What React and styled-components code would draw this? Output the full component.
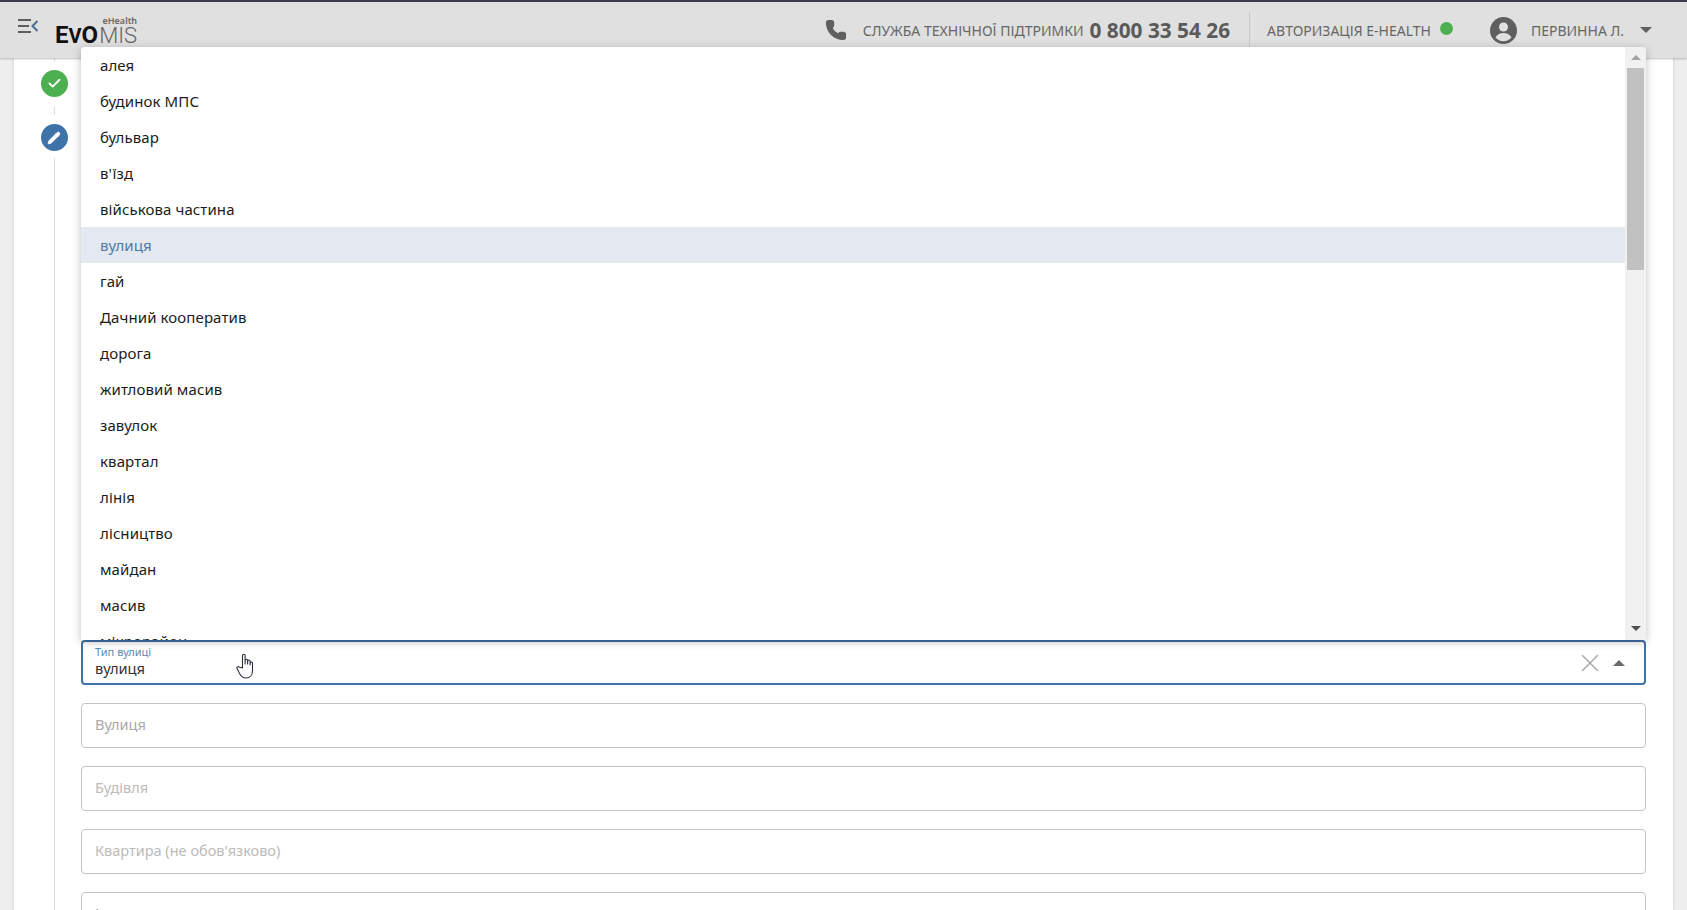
import styled, { createGlobalStyle } from 'styled-components'
import { Check, Pencil, Phone, X } from 'lucide-react'

const Global = createGlobalStyle`
    html, body {
        margin: 0;
        height: 100%;
        overflow: hidden;
        background: #fff;
        font-family: "Noto Sans", "Open Sans", sans-serif;
    }
    * { box-sizing: border-box; }
`

const Page = styled.div`
    height: 910px;
    display: flex;
    flex-flow: column;
    overflow: hidden;
`

const Header = styled.header`
    height: 58px;
    flex: none;
    background: #e0e0e0;
    border-top: 2px solid #3c3c4c;
    box-shadow: 0 1px 2px rgba(0, 0, 0, 0.25);
    display: flex;
    align-items: center;
    padding: 0 35px 0 18px;
    position: relative;
    z-index: 1;
`

const MenuButton = styled.div`
    display: flex;
    margin-top: -8px;
`

const Logo = styled.div`
    margin-left: 17px;
    margin-top: 10px;
    position: relative;
    display: flex;
    align-items: baseline;
    line-height: 24px;
`

const LogoEvo = styled.span`
    font-family: "Roboto", sans-serif;
    font-size: ${(p) => p.$size || 24}px;
    font-weight: 700;
    color: #111;
`

const LogoMis = styled.span`
    font-family: "Roboto", sans-serif;
    font-size: 22px;
    font-weight: 300;
    color: #666;
    margin-left: 1px;
`

const LogoTag = styled.span`
    position: absolute;
    right: 0;
    top: -7px;
    font-size: 9px;
    line-height: 10px;
    font-weight: 600;
    color: #666;
`

const HeaderRight = styled.div`
    margin-left: auto;
    display: flex;
    align-items: center;
    height: 100%;
`

const PhoneIcon = styled(Phone)`
    fill: #5f5f5f;
    stroke: #5f5f5f;
    margin-right: 16px;
`

const HeaderText = styled.span`
    font-size: 14px;
    color: #666;
    margin-left: ${(p) => p.$ml || 0}px;
    white-space: nowrap;
`

const PhoneNumber = styled.span`
    font-size: 20.8px;
    font-weight: 700;
    color: #5a5a5a;
    margin-left: 6px;
    white-space: nowrap;
`

const Divider = styled.div`
    width: 1px;
    height: 36px;
    background: #c8c8c8;
    margin: 0 17px 0 19px;
`

const StatusDot = styled.span`
    width: 13px;
    height: 13px;
    border-radius: 50%;
    background: #4caf50;
    margin: 0 37px 3px 9px;
`

const Caret = styled.span`
    width: 0;
    height: 0;
    border-left: 6px solid transparent;
    border-right: 6px solid transparent;
    border-top: 6px solid #5f5f5f;
    margin-left: 16px;
`

const Body = styled.div`
    flex: 1;
    display: flex;
    min-height: 0;
    background: #eee;
    padding: 0 14px;
`

const Sheet = styled.main`
    flex: 1;
    background: #fff;
    display: flex;
    box-shadow: 0 0 3px rgba(0, 0, 0, 0.15);
    padding-right: 27px;
`

const Stepper = styled.div`
    width: 67px;
    flex: none;
    display: flex;
    flex-flow: column;
    align-items: center;
    padding-left: 13px;
`

const StepLine = styled.span`
    width: 1px;
    flex: ${(p) => (p.$grow ? 1 : 'none')};
    height: ${(p) => p.$h}px;
    background: #ddd;
`

const StepDot = styled.span`
    width: 27px;
    height: 27px;
    flex: none;
    border-radius: 50%;
    background: ${(p) => p.$color};
    color: #fff;
    display: flex;
    align-items: center;
    justify-content: center;
    margin: ${(p) => p.$m};
`

const Form = styled.div`
    flex: 1;
    display: flex;
    flex-flow: column;
    gap: 18px;
    padding-top: 582px;
`

const Field = styled.div`
    height: 45px;
    flex: none;
    border: 1px solid #c4c4c4;
    border-radius: 4px;
    padding: 0 13px 4px;
    display: flex;
    align-items: center;
    font-size: 14.5px;
    color: ${(p) => p.$color || '#aaa'};
`

const SelectField = styled.div`
    height: 45px;
    flex: none;
    position: relative;
    border: 2px solid #3f72a8;
    border-radius: 4px;
    padding: 0 12px;
    display: flex;
    align-items: center;
`

const SelectText = styled.div`
    flex: 1;
    display: flex;
    flex-flow: column;
`

const SelectLabel = styled.span`
    font-size: 11px;
    line-height: 13px;
    color: #5e88b5;
    margin-top: -3px;
`

const SelectValue = styled.span`
    font-size: 14.7px;
    line-height: 20px;
    color: #333;
`

const ClearIcon = styled(X)`
    color: #aaa;
    margin-right: 8px;
`

const CaretUp = styled.span`
    width: 0;
    height: 0;
    border-left: 6px solid transparent;
    border-right: 6px solid transparent;
    border-bottom: 6px solid #6a6a6a;
    margin-right: 7px;
`

const Cursor = styled.svg`
    position: absolute;
    left: 153px;
    top: 11px;
`

const Dropdown = styled.div`
    position: absolute;
    z-index: 2;
    left: -2px;
    right: -2px;
    bottom: calc(100% + 2px);
    height: 593px;
    background: #fff;
    border-radius: 4px 4px 0 0;
    box-shadow: 0 2px 8px rgba(0, 0, 0, 0.25);
    display: flex;
    overflow: hidden;
`

const List = styled.ul`
    flex: 1;
    margin: 0;
    padding: 0;
    list-style: none;
    overflow: hidden;
`

const Item = styled.li`
    height: 36px;
    padding: 0 19px;
    display: flex;
    align-items: center;
    font-size: 15px;
    letter-spacing: 0.1px;
    color: ${(p) => (p.$active ? '#4d7aa8' : '#1c1c1c')};
    background: ${(p) => (p.$active ? '#e4e9f1' : 'transparent')};
`

const Scrollbar = styled.div`
    width: 21px;
    flex: none;
    background: #f1f1f1;
    display: flex;
    flex-flow: column;
    align-items: center;
    padding: 8px 2px 9px;
`

const ScrollThumb = styled.div`
    width: 17px;
    height: 202px;
    background: #c1c1c1;
    margin: 8px 0 auto;
`

const ArrowUp = styled.span`
    border-left: 5px solid transparent;
    border-right: 5px solid transparent;
    border-bottom: 5px solid #a3a3a3;
`

const ArrowDown = styled.span`
    border-left: 5px solid transparent;
    border-right: 5px solid transparent;
    border-top: 5px solid #505050;
`

const streetTypes = [
    'алея', 'будинок МПС', 'бульвар', "в'їзд", 'військова частина', 'вулиця', 'гай',
    'Дачний кооператив', 'дорога', 'житловий масив', 'завулок', 'квартал', 'лінія',
    'лісництво', 'майдан', 'масив', 'мікрорайон',
]

function Avatar() {
    return (
        <svg width="27" height="27" viewBox="0 0 27 27">
            <circle cx="13.5" cy="13.5" r="13.5" fill="#5f5f5f" />
            <circle cx="13.5" cy="10" r="4.5" fill="#e0e0e0" />
            <path d="M5.5 20.5c1.5-3.2 5-4.5 8-4.5s6.500 1.300 8 4.500a10.500 10.500 0 0 1-16 0z" fill="#e0e0e0" />
        </svg>
    )
}

function MenuIcon() {
    return (
        <svg width="20" height="14" viewBox="0 0 20 14" fill="none" strokeWidth="2">
            <path d="M0 1h13M0 7h11M0 13h13" stroke="#5f5f5f" />
            <path d="M19.500 2l-5 5 5 5" stroke="#4a6f95" />
        </svg>
    )
}

function App() {
    return (
        <Page>
            <Global />
            <Header>
                <MenuButton><MenuIcon /></MenuButton>
                <Logo>
                    <LogoTag>eHealth</LogoTag>
                    <LogoEvo>E</LogoEvo>
                    <LogoEvo $size={20}>V</LogoEvo>
                    <LogoEvo>O</LogoEvo>
                    <LogoMis>MIS</LogoMis>
                </Logo>
                <HeaderRight>
                    <PhoneIcon size={22} />
                    <HeaderText>СЛУЖБА ТЕХНІЧНОЇ ПІДТРИМКИ</HeaderText>
                    <PhoneNumber>0 800 33 54 26</PhoneNumber>
                    <Divider />
                    <HeaderText>АВТОРИЗАЦІЯ E-HEALTH</HeaderText>
                    <StatusDot />
                    <Avatar />
                    <HeaderText $ml={14}>ПЕРВИННА Л.</HeaderText>
                    <Caret />
                </HeaderRight>
            </Header>
            <Body>
                <Sheet>
                    <Stepper>
                        <StepLine $h={3} />
                        <StepDot $color="#4caf50" $m="9px 0 9px"><Check size={15} strokeWidth={3} /></StepDot>
                        <StepLine $h={9} />
                        <StepDot $color="#3f72a8" $m="9px 0 7px"><Pencil size={14} fill="#fff" strokeWidth={1.5} /></StepDot>
                        <StepLine $grow />
                    </Stepper>
                    <Form>
                        <SelectField>
                            <Dropdown>
                                <List>
                                    {streetTypes.map((t) => (
                                        <Item key={t} $active={t === 'вулиця'}>{t}</Item>
                                    ))}
                                </List>
                                <Scrollbar>
                                    <ArrowUp />
                                    <ScrollThumb />
                                    <ArrowDown />
                                </Scrollbar>
                            </Dropdown>
                            <SelectText>
                                <SelectLabel>Тип вулиці</SelectLabel>
                                <SelectValue>вулиця</SelectValue>
                            </SelectText>
                            <ClearIcon size={30} strokeWidth={1.2} />
                            <CaretUp />
                            <Cursor width="19" height="26" viewBox="0 0 19 26" fill="#fff" stroke="#2a2f3a" strokeWidth="1.1" strokeLinejoin="round">
                                <path d="M6.500 15V2.500a1.300 1.300 0 0 1 2.600 0V11l.1-3.500a1.200 1.200 0 0 1 2.400 0V11l.1-2.800a1.200 1.200 0 0 1 2.400 0V12l.2-1.900a1.100 1.100 0 0 1 2.200 .1V18c0 4-2.500 7-6.500 7-3.200 0-4.800-1.600-6-3.800L1 15.500c-.7-1.300 1-2.500 2.100-1.500z" />
                            </Cursor>
                        </SelectField>
                        <Field>Вулиця</Field>
                        <Field $color="#bbb">Будівля</Field>
                        <Field $color="#bbb">Квартира (не обов'язково)</Field>
                        <Field $color="#999">І</Field>
                    </Form>
                </Sheet>
            </Body>
        </Page>
    )
}

export default App
